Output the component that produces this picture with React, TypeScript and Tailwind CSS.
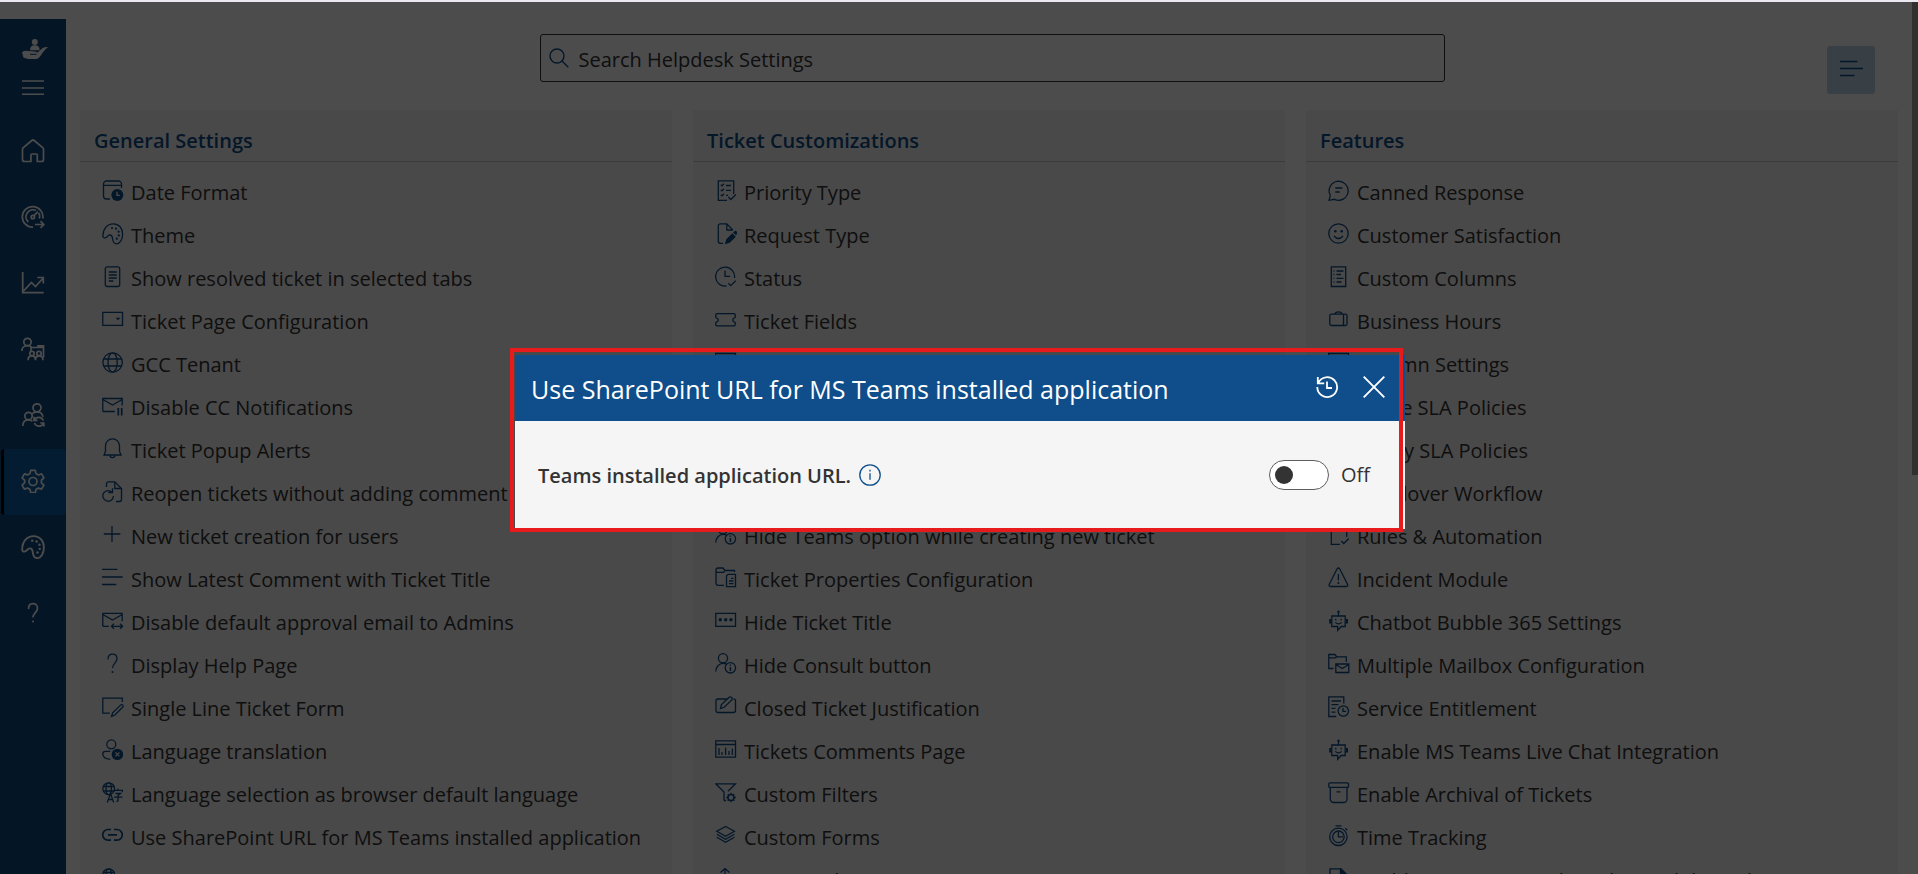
import React from "react";

const A = "#0f4e8a";
const P = "#f4f4f4";

const person = (
  <>
    <circle cx="8" cy="5.3" r="4.6" />
    <path d="M.7 18.5C1 14 4 10.4 8 10.4c1.600 0 2.800.4 4 1.200" />
  </>
);

const globeSmall = (
  <>
    <circle cx="6.700" cy="6.700" r="5.900" />
    <ellipse cx="6.700" cy="6.700" rx="2.700" ry="5.900" />
    <path d="M1.300 4.500h10.800M1.300 9h10.800" />
  </>
);

const bot = (
  <>
    <circle cx="10.500" cy="1.800" r="1.200" fill={A} stroke="none" />
    <path d="M10.500 2v4M3.800 6h13.400v10.500h-4l-3.500 3.800v-3.800H3.800z" />
    <path d="M2.200 9v4.500M19 9v4.500" strokeWidth="2" />
    <path d="M7.800 8.800v1.800M13.200 8.800v1.800M7.300 12.400q3.200 3 6.400 0" />
  </>
);

const mail = <path d="M.8 4.500 10.500 10l9.700-5.500M.8 16.500v-13h19.400v7M.8 16.500h12" />;

const palette = (
  <>
    <path d="M.9 12.700C.9 6.200 5 .8 11.300.8c5.700 0 9.300 4.600 9.300 10.200 0 5.500-2.600 9.800-6 9.800-3.200 0-3.700-2.300-4-4.800-.2-2.400-.9-4.100-2.800-4-2 .1-2.900 2.700-4.900 2.900-1.300.1-2-.8-2-2.200z" />
    <g fill="currentColor" stroke="none">
      <circle cx="10" cy="5" r="1.100" />
      <circle cx="14" cy="5.700" r="1.100" />
      <circle cx="16.600" cy="8.700" r="1.100" />
      <circle cx="16.800" cy="12.400" r="1.100" />
      <circle cx="14.800" cy="15.700" r="1.100" />
    </g>
  </>
);

const icons: Record<string, React.ReactNode> = {
  date: (
    <>
      <path d="M19.500 8V4a3 3 0 0 0-3-3H4.500a3 3 0 0 0-3 3v12a3 3 0 0 0 3 3H8M1.500 5.300h18" />
      <circle cx="15.300" cy="15" r="6" fill={A} stroke="none" />
      <path d="M15 11.800V15.300h2.800" stroke={P} />
    </>
  ),
  palette,
  doc: (
    <>
      <rect x="3.300" y=".8" width="14.400" height="19.700" rx="2" />
      <path d="M6.800 6h8M6.800 9h8M6.800 12h8M6.800 15h4.500" />
    </>
  ),
  page: (
    <>
      <path d="M.8 3.300h19.700v13H.8z" />
      <path d="M13.500 8.700h5L16 11.300z" fill={A} stroke="none" />
    </>
  ),
  globe: (
    <>
      <circle cx="10.600" cy="10.500" r="9.700" />
      <ellipse cx="10.600" cy="10.500" rx="4.600" ry="9.700" />
      <path d="M1.800 7h17.600M1.800 14h17.600" />
    </>
  ),
  mailPause: (
    <>
      {mail}
      <path d="M16.300 13v7.500M19.700 13v7.500" strokeWidth="1.700" />
    </>
  ),
  bell: (
    <>
      <path d="M10.500.8a7 7 0 0 0-7 7v5.400L2 17h17l-1.500-3.800V7.800a7 7 0 0 0-7-7z" />
      <path d="M7.800 17.500a2.800 2.800 0 0 0 5.400 0" />
    </>
  ),
  reopen: (
    <>
      <path d="M4.500 6V2.800a2 2 0 0 1 2-2h6.300l6.700 6.700v11a2 2 0 0 1-2 2H14M12.800.8v6.700h6.700" />
      <path d="M9.900 11.200A5.300 5.300 0 1 0 11.400 15M10.500 7.300v4.200H6.300" />
    </>
  ),
  plus: <path d="M10 2v16M1.800 10h16.500" />,
  lines: <path d="M0 2.300h15.500M0 10h20.700M0 17.500h14.300" />,
  mailArrows: (
    <>
      <path d="M.8 4.500 10.500 10l9.700-5.500M.8 16.300v-13h19.400v8M.8 16.300h6" />
      <path d="M9.500 16.300h11M12 13.800l-2.600 2.500 2.600 2.500M18 13.800l2.600 2.500-2.600 2.500" />
    </>
  ),
  help: (
    <>
      <path d="M6 6.500C6 3 8 1.200 10.500 1.200S15 3 15 5.800c0 4-4.500 4.700-4.500 9.200" />
      <circle cx="10.500" cy="19" r="1" fill="currentColor" stroke="none" />
    </>
  ),
  formEdit: (
    <>
      <path d="M20.300 6V2.200H.8v15h7" />
      <path d="M9.500 20.300l1.200-3.500 7.800-7.700a1.500 1.500 0 0 1 2.100 2.200l-7.700 7.700z" />
    </>
  ),
  userX: (
    <>
      <circle cx="9.300" cy="5.300" r="4.500" />
      <path d="M8.300 12.300H3.500c-1.500 0-2.700 1.200-2.700 2.700 0 3.300 3 5 7.500 5.300" />
      <circle cx="15.400" cy="15.400" r="5.700" fill={A} stroke="none" />
      <path d="M13.400 13.400l4 4M17.400 13.400l-4 4" stroke={P} />
    </>
  ),
  language: (
    <>
      {globeSmall}
      <path d="M5.300 20.500l3.200-9 3.200 9M6.300 17.500h4.400M12 9.500V8.300h8.300v1.700M16 6.800v1.500M13.500 11.500h5L16 13.500v5.300l-1.500.8M12 15.200h8.500" />
    </>
  ),
  link: (
    <path
      d="M9 4.500H6a5.300 5.300 0 0 0 0 10.600h3M12 4.500h3a5.300 5.300 0 0 1 0 10.600h-3M6 9.800h9"
      strokeWidth="1.700"
    />
  ),
  checklist: (
    <>
      <path d="M18.700 14V.8H3.300v19.500H12M13.300 17l2.500 2.500 5-5" />
      <path d="M5.800 4.700l1.200 1.200 2-2.200M5.800 9.700l1.200 1.200 2-2.200M5.800 14.700l1.200 1.200 2-2.200M11 5.500h5M11 10.300h5M11 15.300h2" />
    </>
  ),
  docEdit: (
    <>
      <path d="M8 20.300H5.300a2 2 0 0 1-2-2V2.800a2 2 0 0 1 2-2h6.500l6 6.200M11.800.8V7h6" />
      <path d="M9.800 21.300l1.500-5 6-6 3.500 3.500-6 6zM18 9.500l1.200-1a1.700 1.700 0 0 1 2.600 2.500l-.8 1.300z" fill={A} stroke="none" />
    </>
  ),
  clockCheck: (
    <>
      <path d="M19.500 12a9.500 9.500 0 1 0-8 8M10 4.500v5.800h5.200M13.300 17.300l2.400 2.400 5-5" />
    </>
  ),
  ticket: (
    <path d="M.8 5.800q0-1.200 1.200-1.200h17q1.200 0 1.200 1.200v2.600q-2.500 1-2.500 2.600t2.500 2.600v2q0 1.200-1.200 1.200H2q-1.200 0-1.200-1.200v-2q2.500-1 2.500-2.600T.8 8.400z" />
  ),
  userInfo: (
    <>
      {person}
      <circle cx="15.400" cy="14.800" r="5.200" />
      <path d="M15.400 14v4M15.400 11.500v1.300" strokeWidth="1.500" />
    </>
  ),
  folderDoc: (
    <>
      <path d="M9 18.300H3a2 2 0 0 1-2-2V3a2 2 0 0 1 2-2h5l2 2.500h9.500V5M1 5.300h7.500L10 3.500" />
      <path d="M13 7.300h7.500v12.400h-9V8.800z" />
      <path d="M16 11.300h2.500M14 14h4.500M14 16.700h4.500" />
    </>
  ),
  dots: (
    <>
      <path d="M.8 3.300h19.700v13H.8z" />
      <g fill={A} stroke="none">
        <circle cx="5.300" cy="9.800" r="1.700" />
        <circle cx="10.700" cy="9.800" r="1.700" />
        <circle cx="16" cy="9.800" r="1.700" />
      </g>
    </>
  ),
  cardEdit: (
    <>
      <path d="M12 3H3a2 2 0 0 0-2 2v9.500a2 2 0 0 0 2 2h15.500a2 2 0 0 0 2-2V5a2 2 0 0 0-2-2" />
      <path d="M5.500 12.500l1-4 7.600-7.200a1.900 1.900 0 0 1 2.700 2.600l-7.600 7.400z" />
    </>
  ),
  chartPage: (
    <>
      <path d="M.8 1.800h19.700v16.400H.8zM.8 5.500h19.700" />
      <path d="M4 9v7M7 13v3M10.600 8.500V16M14 12v4M17.300 9.500V16" />
    </>
  ),
  filter: (
    <>
      <path d="M9 18.500V10L.8 1.800h19.700L13 9.300M9 18.500h2" />
      <circle cx="16" cy="15.500" r="3" strokeWidth="1.600" />
      <path d="M16 10.800v2M16 18.300v2M11.300 15.500h2M18.800 15.500h2M12.700 12.200l1.300 1.300M18 17.500l1.300 1.300M19.300 12.200L18 13.500M14 17.500l-1.300 1.300" />
    </>
  ),
  layers: (
    <path d="M10.600 1.500l8.800 4.800-8.800 4.900-8.800-4.900zM1.800 9.300l8.800 5 8.800-5M1.800 12.300l8.800 5 8.800-5" />
  ),
  merge: <path d="M10 0v20M5.500 4.500L10 .5l4.500 4" />,
  comment: (
    <>
      <path d="M1 20.300l1.300-5A9.500 9.500 0 1 1 6.500 19.300z" />
      <path d="M7.300 8h7M7.300 12h4.500" />
    </>
  ),
  smile: (
    <>
      <circle cx="10.500" cy="10.500" r="9.700" />
      <path d="M6 13q4.500 5 9 0" />
      <g fill={A} stroke="none">
        <circle cx="7.300" cy="8.200" r="1.300" />
        <circle cx="13.700" cy="8.200" r="1.300" />
      </g>
    </>
  ),
  columns: (
    <>
      <path d="M3.300.8h14.400v19.700H3.300z" />
      <path d="M5.500 5h1M5.500 8.500h1M5.500 12.300h1M5.500 16h1M8.500 5h7M8.500 8.500h4.500M8.500 12.300h7M8.500 16h5" />
    </>
  ),
  briefcase: (
    <>
      <rect x="1.800" y="5.200" width="17.200" height="11.300" rx="1.500" />
      <path d="M15.500 5.200v11.300M6.800 5.200q.5-2.400 3.700-2.400t3.700 2.400" />
    </>
  ),
  panel: <path d="M.5 1.500h20v15H.5zM.5 5.500h20" />,
  docCheck: <path d="M18.700 13V.8H3.300v19.500H12M13.300 17l2.500 2.500 5-5" />,
  warn: (
    <>
      <path d="M9 2q1.400-2 2.800 0l7.800 15.500q.7 2-1.300 2H2.500q-2 0-1.300-2z" />
      <path d="M10.400 7v6.500" />
      <circle cx="10.400" cy="16" r="1" fill={A} stroke="none" />
    </>
  ),
  bot,
  folderMail: (
    <>
      <path d="M5.500 15.500H.8V1.500h6l2 2.300h9.500V9M.8 4.800h6.500l1.500-1" />
      <path d="M7.800 11h13v8.500h-13zM7.800 11.500l6.500 4 6.500-4" />
    </>
  ),
  docClock: (
    <>
      <path d="M15.800 7.500V.8H.8v19.700h7.500" />
      <path d="M3.500 5h9.500M3.500 8.700h7M3.500 12.400h4M3.500 16.200h4" />
      <circle cx="15.300" cy="15" r="5.200" />
      <path d="M15 11.800v3.500h3" />
    </>
  ),
  archive: (
    <>
      <rect x=".8" y=".8" width="19.700" height="4.600" rx="1" />
      <path d="M2.300 5.400V17a3.500 3.500 0 0 0 3.500 3.500h9.700A3.500 3.500 0 0 0 19 17V5.400M8.500 9.800h4" />
    </>
  ),
  stopwatch: (
    <>
      <circle cx="10.400" cy="11.800" r="8.700" />
      <circle cx="10.400" cy="11.800" r="5.800" />
      <path d="M7.500 .8h6M17.300 3.300l2 2M10.400 7v4.800h4.800" />
    </>
  ),
  docLines: (
    <>
      <path d="M2 20.500V.8h11l6 6v13.700z" />
      <path d="M12.500.8v6.500H19z" fill={A} />
    </>
  ),
};

function Icon({ name }: { name: string }) {
  return (
    <svg
      viewBox="0 0 22 22"
      aria-hidden="true"
      className="mb-1 size-[22px] shrink-0 text-[#0f4e8a]"
      fill="none"
      stroke="currentColor"
      strokeWidth="1.300"
    >
      {icons[name]}
    </svg>
  );
}

const sections: { title: string; items: [string, string][] }[] = [
  {
    title: "General Settings",
    items: [
      ["date", "Date Format"],
      ["palette", "Theme"],
      ["doc", "Show resolved ticket in selected tabs"],
      ["page", "Ticket Page Configuration"],
      ["globe", "GCC Tenant"],
      ["mailPause", "Disable CC Notifications"],
      ["bell", "Ticket Popup Alerts"],
      ["reopen", "Reopen tickets without adding comment"],
      ["plus", "New ticket creation for users"],
      ["lines", "Show Latest Comment with Ticket Title"],
      ["mailArrows", "Disable default approval email to Admins"],
      ["help", "Display Help Page"],
      ["formEdit", "Single Line Ticket Form"],
      ["userX", "Language translation"],
      ["language", "Language selection as browser default language"],
      ["link", "Use SharePoint URL for MS Teams installed application"],
      ["language", "Language"],
    ],
  },
  {
    title: "Ticket Customizations",
    items: [
      ["checklist", "Priority Type"],
      ["docEdit", "Request Type"],
      ["clockCheck", "Status"],
      ["ticket", "Ticket Fields"],
      ["panel", "Ticket Sequence"],
      ["doc", "Ticket Templates"],
      ["checklist", "Sub Tickets"],
      ["ticket", "Ticket Title"],
      ["userInfo", "Hide Teams option while creating new ticket"],
      ["folderDoc", "Ticket Properties Configuration"],
      ["dots", "Hide Ticket Title"],
      ["userInfo", "Hide Consult button"],
      ["cardEdit", "Closed Ticket Justification"],
      ["chartPage", "Tickets Comments Page"],
      ["filter", "Custom Filters"],
      ["layers", "Custom Forms"],
      ["merge", "Merge Tickets"],
    ],
  },
  {
    title: "Features",
    items: [
      ["comment", "Canned Response"],
      ["smile", "Customer Satisfaction"],
      ["columns", "Custom Columns"],
      ["briefcase", "Business Hours"],
      ["panel", "Column Settings"],
      ["doc", "Single SLA Policies"],
      ["doc", "Expiry SLA Policies"],
      ["doc", "Handover Workflow"],
      ["docCheck", "Rules & Automation"],
      ["warn", "Incident Module"],
      ["bot", "Chatbot Bubble 365 Settings"],
      ["folderMail", "Multiple Mailbox Configuration"],
      ["docClock", "Service Entitlement"],
      ["bot", "Enable MS Teams Live Chat Integration"],
      ["archive", "Enable Archival of Tickets"],
      ["stopwatch", "Time Tracking"],
      ["docLines", "Enable comments in the ticket and through"],
    ],
  },
];

const nav: { label: string; icon: React.ReactNode; active?: boolean }[] = [
  {
    label: "Home",
    icon: <path d="M3.500 22.500a2 2 0 0 1-2-2V10.300q0-1 .8-1.700L10.800 1.500q1.200-1 2.400 0l8.500 7.100q.8.700.8 1.700v10.200a2 2 0 0 1-2 2h-4.200v-6.300q0-1.200-1.200-1.200h-4q-1.200 0-1.200 1.200v6.300z" />,
  },
  {
    label: "Dashboard",
    icon: (
      <>
        <path d="M21.800 13.500a10.300 10.300 0 1 0-9.800 8.700M18.300 13.500a7 7 0 0 0-.5-5.500M15 5.500A7 7 0 0 0 7.300 17M13 10.700l4-4M14 19.500h8.800M19.500 16.200l3.300 3.300-3.300 3.300" />
        <circle cx="11.800" cy="12" r="1.700" />
      </>
    ),
  },
  { label: "Reports", icon: <path d="M1.700 1v20.700h21M2.500 20l8-8.500 4 4L22 7.300M16.300 6.500h6v6" /> },
  {
    label: "Teams",
    icon: (
      <>
        <circle cx="6.500" cy="5" r="3.700" />
        <path d="M.8 14c0-3.500 2.500-5.300 5.700-5.300q2.500 0 4 1.500M10 14v-3.500h12.500v10M17 10.500V8.800h5.500V11" />
        <circle cx="11" cy="16.500" r="2.200" />
        <circle cx="18" cy="16.500" r="2.200" />
        <path d="M7 23.300c0-3 1.500-4.500 4-4.500s3.500 1.500 3.500 4.500c0-3 1.500-4.500 3.700-4.500 2.300 0 3.800 1.500 3.800 4.500" />
      </>
    ),
  },
  {
    label: "Users",
    icon: (
      <>
        <circle cx="16" cy="4.800" r="4" />
        <circle cx="7.500" cy="13" r="3.700" />
        <path d="M1.800 23c0-4 2.300-6.200 5.700-6.200q2.500 0 4 1.500M11 11c1.300-1.500 3-2.200 5-2.200 3.300 0 5.500 2 6 5" />
        <path d="M22.300 17.500a5 5 0 0 0-9-.5M13 13.800v3.500h3.500M13.500 20a5 5 0 0 0 9 .7M22.800 23.500V20h-3.500" />
      </>
    ),
  },
  {
    label: "Settings",
    active: true,
    icon: (
      <>
        <path d="M9.700 1.300h4.600l.7 3.300 2.400 1.400 3.200-1.100 2.300 4-2.500 2.300v2.700l2.500 2.200-2.300 4-3.200-1-2.400 1.300-.7 3.300H9.700L9 20.400 6.600 19l-3.200 1.100-2.300-4 2.500-2.300v-2.700L1.100 8.900l2.300-4 3.200 1L9 4.600z" strokeLinejoin="round" />
        <circle cx="12" cy="12.500" r="4" />
      </>
    ),
  },
  { label: "Theme", icon: <g transform="scale(1.100) translate(.2 .2)">{palette}</g> },
  { label: "Help", icon: <g transform="translate(1.500 1.500)">{icons.help}</g> },
];

function Sidebar() {
  return (
    <aside className="mt-[17px] flex w-[66px] shrink-0 flex-col items-center bg-[#0f4880] pt-[19px] text-white">
      <svg viewBox="0 0 28 24" className="ml-1 h-6 w-7 shrink-0" fill="currentColor" role="img" aria-label="Helpdesk">
        <circle cx="13.800" cy="4" r="3" />
        <path d="M9 12.200q0-5 4.800-5t4.800 5z" />
        <path d="M1 14.200q2.500-2 6.500-1.200l6.500.5q2.300.2 2.200 1.200l5.500-4.700q3.500-1.600 5.300-.8-3 1.800-5.200 5.300Q18 20.500 15.500 21H7.300q-3-1-4.800-1.200z" />
        <path d="M9 16.300h6.500" stroke="#0f4880" strokeWidth="1" />
      </svg>
      <button type="button" aria-label="Toggle navigation" className="mt-3.5 h-6 w-6">
        <svg viewBox="0 0 24 24" className="h-6 w-6" stroke="currentColor" strokeWidth="1.500" aria-hidden="true">
          <path d="M1 5h22M1 12h22M1 18.200h22" />
        </svg>
      </button>
      <nav className="mt-[19px] flex w-full flex-col">
        {nav.map((n) => (
          <a
            key={n.label}
            href={"#" + n.label.toLowerCase()}
            aria-label={n.label}
            className={
              n.active
                ? "ml-px flex h-[66px] items-center justify-center rounded-sm border-l-[3px] border-black bg-[#1060a8] pr-1"
                : "flex h-[66px] items-center justify-center"
            }
          >
            <svg viewBox="0 0 24 24" className="mb-0.5 h-6 w-6" fill="none" stroke="currentColor" strokeWidth="1.700" aria-hidden="true">
              {n.icon}
            </svg>
          </a>
        ))}
      </nav>
    </aside>
  );
}

function SettingsDialog() {
  return (
    <div role="dialog" aria-modal="true" aria-labelledby="dialog-title" className="relative w-full max-w-[890px]">
      <header className="flex h-[66px] items-center justify-between bg-[#0f4e8a] pr-[19px] pl-4 text-white">
        <h2 id="dialog-title" className="pt-1 text-[25px]">
          Use SharePoint URL for MS Teams installed application
        </h2>
        <div className="flex items-center gap-[23px] pb-0.5">
          <button type="button" aria-label="History">
            <svg viewBox="0 0 24 24" className="size-6" fill="none" stroke="currentColor" strokeWidth="1.800" aria-hidden="true">
              <path d="M3.300 7.800A9.900 9.900 0 1 1 2.300 12M2.800 2v6.300h6.400M12 6.500V13h5" />
            </svg>
          </button>
          <button type="button" aria-label="Close">
            <svg viewBox="0 0 24 24" className="size-6" stroke="currentColor" strokeWidth="1.900" aria-hidden="true">
              <path d="M1.700 1.700l20.600 20.600M22.300 1.700L1.700 22.300" />
            </svg>
          </button>
        </div>
      </header>
      <div className="flex h-[108px] items-center justify-between bg-[#f5f5f5] pr-[35px] pl-[23px] text-xl text-[#333]">
        <div className="flex items-center gap-2">
          <span id="url-label" className="pt-0.5 font-semibold">
            Teams installed application URL.
          </span>
          <svg viewBox="0 0 22 22" className="size-[22px] text-[#0f4e8a]" fill="none" stroke="currentColor" strokeWidth="1.300" role="img" aria-label="Information">
            <circle cx="11" cy="11" r="10.200" />
            <path d="M11 9.200v6.500M11 5.800v1.700" />
          </svg>
        </div>
        <label className="flex items-center gap-3">
          <input type="checkbox" role="switch" aria-labelledby="url-label" className="peer sr-only" />
          <span className="flex h-[30px] w-[60px] items-center rounded-full border border-[#605e5c] bg-white px-[5px]">
            <span className="size-[18px] rounded-full bg-[#333]" />
          </span>
          <span>Off</span>
        </label>
      </div>
      <div className="pointer-events-none absolute -top-[7px] right-[2px] -bottom-[3px] -left-[5px] border-4 border-[#e81b1c]" />
    </div>
  );
}

export default function App() {
  return (
    <div className="flex h-screen flex-col overflow-hidden bg-white font-['Open_Sans',sans-serif] text-[#333]">
      <div className="h-0.5 shrink-0 bg-[#ebe8f2]" />
      <div className="relative flex min-h-0 flex-1 overflow-hidden">
        <Sidebar />
        <main className="relative min-w-0 flex-1">
          <div className="flex h-[108px] justify-center pt-8">
            <label className="flex h-12 w-full max-w-[905px] items-center gap-2.5 rounded-[3px] border border-[#333] pl-2">
              <svg viewBox="0 0 20 20" className="mb-px size-5 shrink-0 text-[#0f4e8a]" fill="none" stroke="currentColor" strokeWidth="1.400" aria-hidden="true">
                <circle cx="8" cy="8" r="7" />
                <path d="M13 13l6.300 6.300" />
              </svg>
              <input
                type="search"
                aria-label="Search Helpdesk Settings"
                placeholder="Search Helpdesk Settings"
                className="h-full w-full bg-transparent pt-0.5 text-xl outline-none placeholder:text-[#333]"
              />
            </label>
            <button type="button" aria-label="Show summary" className="absolute top-11 right-[43px] flex size-12 items-center justify-center rounded-[3px] bg-[#bdd3e8]">
              <svg viewBox="0 0 24 18" className="mb-1 h-[18px] w-6 text-[#0f4e8a]" stroke="currentColor" strokeWidth="1.500" aria-hidden="true">
                <path d="M1 2.500h17.500M1 9.500h23M1 16.500h14.500" />
              </svg>
            </button>
          </div>
          <div className="grid grid-cols-3 gap-[21px] pr-5 pl-3.5">
            {sections.map((s) => (
              <section key={s.title} className="min-w-0 bg-[#f4f4f4]">
                <h2 className="flex h-[52px] items-center border-b border-[#c8c8c8] pt-2.5 pl-3.5 text-xl font-semibold text-[#0f4e8a]">
                  {s.title}
                </h2>
                <ul className="pt-[9px] pl-[22px]">
                  {s.items.map(([icon, label], i) => (
                    <li key={i}>
                      <button type="button" className="flex h-[43px] w-full items-center gap-[7px] text-left text-xl whitespace-nowrap">
                        <Icon name={icon} />
                        {label}
                      </button>
                    </li>
                  ))}
                </ul>
              </section>
            ))}
          </div>
          <div className="absolute top-0 right-0 h-[473px] w-1.5 bg-[#a0a0a0]" />
        </main>
        <div className="absolute inset-0 flex items-center justify-center bg-black/70 pt-2 pl-0.5">
          <SettingsDialog />
        </div>
      </div>
    </div>
  );
}
